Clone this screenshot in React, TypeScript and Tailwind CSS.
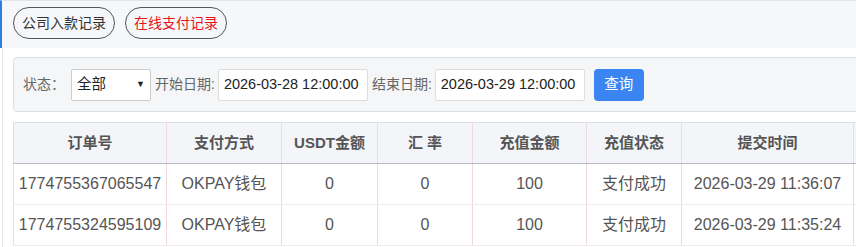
import React from "react";

const cols = [
  { t: "订单号", w: 153 },
  { t: "支付方式", w: 115 },
  { t: "USDT金额", w: 96 },
  { t: "汇 率", w: 95 },
  { t: "充值金额", w: 114 },
  { t: "充值状态", w: 95 },
  { t: "提交时间", w: 172 },
  { t: "", w: 100 },
];

const rows = [
  ["1774755367065547", "OKPAY钱包", "0", "0", "100", "支付成功", "2026-03-29 11:36:07", ""],
  ["1774755324595109", "OKPAY钱包", "0", "0", "100", "支付成功", "2026-03-29 11:35:24", ""],
];

export default function App() {
  return (
    <div
      className="w-[856px] h-[247px] overflow-hidden bg-white relative"
      style={{ fontFamily: '"Liberation Sans", "Noto Sans CJK SC", sans-serif' }}
    >
      {/* top tabs */}
      <div className="h-[48px] bg-[#f5f7fa] border-t border-[#e2e4e8] border-l-2 border-l-[#2f7fe0] flex items-start pt-[6px] pl-[11px] gap-[10px]">
        <div className="h-[32px] px-[8px] rounded-full border border-[#555] text-[14px] text-[#333] flex items-center">
          公司入款记录
        </div>
        <div className="h-[32px] px-[8px] rounded-full border border-[#555] text-[14px] text-[#e8141c] flex items-center">
          在线支付记录
        </div>
      </div>

      {/* content */}
      <div className="ml-[2px] border-l border-[#e6e6e6] pl-[10px] pt-[9px] h-[199px]">
        <div className="w-[1000px] h-[55px] bg-[#f5f6f8] border border-[#dcdfe3] rounded-[4px] flex items-center pl-[9px] text-[14px] text-[#666]">
          <span>状态：</span>
          <div className="ml-[6px] w-[80px] h-[32px] bg-white border border-[#ccc] rounded-[2px] flex items-center justify-between pl-[5px] pr-[5px] text-[#222] text-[14.5px]">
            <span>全部</span>
            <span className="text-[9px] text-[#222]">▼</span>
          </div>
          <span className="ml-[4px]">开始日期:</span>
          <div className="ml-[3px] w-[150px] h-[32px] bg-white border border-[#ddd] rounded-[2px] flex items-center pl-[5px] text-[#222] text-[14.5px]">
            2026-03-28 12:00:00
          </div>
          <span className="ml-[4px]">结束日期:</span>
          <div className="ml-[3px] w-[150px] h-[32px] bg-white border border-[#ddd] rounded-[2px] flex items-center pl-[5px] text-[#222] text-[14.5px]">
            2026-03-29 12:00:00
          </div>
          <div className="ml-[9px] w-[50px] h-[32px] bg-[#3a85f2] rounded-[4px] flex items-center justify-center text-white text-[14.5px]">
            查询
          </div>
        </div>

        <table className="mt-[10px] border-collapse table-fixed w-[940px]">
          <colgroup>
            {cols.map((c, i) => (
              <col key={i} style={{ width: c.w }} />
            ))}
          </colgroup>
          <thead>
            <tr className="h-[41px] bg-[#f3f5f8]">
              {cols.map((c, i) => (
                <th
                  key={i}
                  className={`font-bold text-[15px] text-[#555] text-center border-t border-t-[#dcdfe3] border-b border-b-[#b8bcc2] ${
                    i === 0 ? "border-l border-l-[#dcdfe3]" : "border-l border-l-[#f0d9dd]"
                  }`}
                >
                  {c.t}
                </th>
              ))}
            </tr>
          </thead>
          <tbody>
            {rows.map((r, ri) => (
              <tr key={ri} className="h-[41px]">
                {r.map((v, ci) => (
                  <td
                    key={ci}
                    className={`text-[16px] text-[#555] text-center whitespace-nowrap border-b border-b-[#ececec] ${
                      ci === 0 ? "border-l border-l-[#e2e2e2]" : "border-l border-l-[#f0d9dd]"
                    }`}
                  >
                    {v}
                  </td>
                ))}
              </tr>
            ))}
          </tbody>
        </table>
      </div>
    </div>
  );
}
